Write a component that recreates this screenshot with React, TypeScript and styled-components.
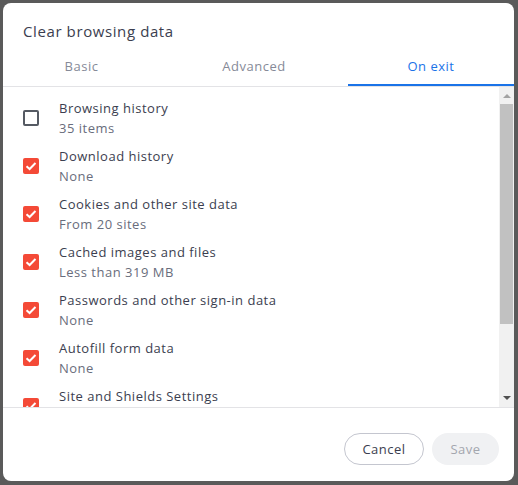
import React from "react";
import styled, { createGlobalStyle } from "styled-components";

const Global = createGlobalStyle`
  html, body { margin: 0; padding: 0; background: #5a5a5a; }
  body { font-family: "Open Sans", "Liberation Sans", sans-serif; letter-spacing: 0.5px; }
  * { box-sizing: border-box; }
`;

const Backdrop = styled.div`
  width: 518px;
  height: 485px;
  padding: 3px 4px 4px 3px;
  background: #5a5a5a;
`;

const Dialog = styled.div`
  width: 511px;
  height: 478px;
  background: #ffffff;
  border-radius: 8px;
  display: flex;
  flex-direction: column;
  overflow: hidden;
`;

const Title = styled.h2`
  margin: 18px 0 0 20px;
  font-size: 15px;
  line-height: 20px;
  font-weight: 400;
  color: #3b3e4f;
  letter-spacing: 0.6px;
`;

const Tabs = styled.div`
  margin-top: 5px;
  display: grid;
  grid-template-columns: 157px 188px 166px;
  border-bottom: 1px solid #e3e3e6;
`;

const Tab = styled.div<{ $active?: boolean }>`
  height: 40px;
  display: flex;
  align-items: center;
  justify-content: center;
  font-size: 13px;
  color: ${(p) => (p.$active ? "#1a73e8" : "#868a98")};
  box-shadow: ${(p) => (p.$active ? "inset 0 -2px 0 #1a73e8" : "none")};
`;

const ListArea = styled.div`
  height: 321px;
  display: flex;
  border-bottom: 1px solid #e3e3e6;
`;

const List = styled.div`
  flex: 1;
  overflow: hidden;
  padding: 7px 0 0 20px;
`;

const Row = styled.div`
  display: flex;
  align-items: center;
  gap: 20px;
  padding: 4px 0;
`;

const Box = styled.div<{ $checked?: boolean }>`
  width: 16px;
  height: 16px;
  flex: none;
  border-radius: 2px;
  display: flex;
  align-items: center;
  justify-content: center;
  background: ${(p) => (p.$checked ? "#f44a37" : "transparent")};
  border: ${(p) => (p.$checked ? "none" : "2px solid #555a63")};
`;

const Texts = styled.div`
  display: flex;
  flex-direction: column;
`;

const ItemTitle = styled.div`
  font-size: 13px;
  line-height: 20px;
  color: #3b3e4f;
`;

const ItemSub = styled.div`
  font-size: 13px;
  line-height: 20px;
  color: #696d7c;
`;

const Scrollbar = styled.div`
  width: 15px;
  flex: none;
  background: #f1f1f1;
  display: flex;
  flex-direction: column;
  align-items: center;
`;

const Arrow = styled.div`
  height: 17px;
  width: 15px;
  display: flex;
  align-items: center;
  justify-content: center;
`;

const Thumb = styled.div`
  width: 13px;
  height: 220px;
  background: #c1c1c1;
`;

const Spacer = styled.div`
  flex: 1;
`;

const Footer = styled.div`
  flex: 1;
  display: flex;
  justify-content: flex-end;
  align-items: flex-start;
  gap: 8px;
  padding: 25px 15px 0 0;
`;

const Button = styled.button<{ $primary?: boolean }>`
  height: 32px;
  border-radius: 16px;
  font-family: inherit;
  font-size: 13px;
  letter-spacing: 0.5px;
  padding: 0;
  width: ${(p) => (p.$primary ? "67px" : "80px")};
  border: ${(p) => (p.$primary ? "none" : "1px solid #c4c6cf")};
  background: ${(p) => (p.$primary ? "#f0f1f3" : "#ffffff")};
  color: ${(p) => (p.$primary ? "#a3a6ae" : "#3b3e4f")};
`;

const Check = () => (
  <svg width="12" height="10" viewBox="0 0 12 10">
    <path d="M1.5 5.2 L4.6 8 L10.5 2" fill="none" stroke="#fff" strokeWidth="2" />
  </svg>
);

const items = [
  { title: "Browsing history", sub: "35 items", checked: false },
  { title: "Download history", sub: "None", checked: true },
  { title: "Cookies and other site data", sub: "From 20 sites", checked: true },
  { title: "Cached images and files", sub: "Less than 319 MB", checked: true },
  { title: "Passwords and other sign-in data", sub: "None", checked: true },
  { title: "Autofill form data", sub: "None", checked: true },
  { title: "Site and Shields Settings", sub: "None", checked: true },
];

export default function App() {
  return (
    <>
      <Global />
      <Backdrop>
        <Dialog>
          <Title>Clear browsing data</Title>
          <Tabs>
            <Tab>Basic</Tab>
            <Tab>Advanced</Tab>
            <Tab $active>On exit</Tab>
          </Tabs>
          <ListArea>
            <List>
              {items.map((it) => (
                <Row key={it.title}>
                  <Box $checked={it.checked}>{it.checked && <Check />}</Box>
                  <Texts>
                    <ItemTitle>{it.title}</ItemTitle>
                    <ItemSub>{it.sub}</ItemSub>
                  </Texts>
                </Row>
              ))}
            </List>
            <Scrollbar>
              <Arrow>
                <svg width="8" height="5" viewBox="0 0 8 5">
                  <path d="M0 5 L4 1 L8 5 Z" fill="#a3a3a3" />
                </svg>
              </Arrow>
              <Thumb />
              <Spacer />
              <Arrow>
                <svg width="8" height="5" viewBox="0 0 8 5">
                  <path d="M0 0 L8 0 L4 4 Z" fill="#505050" />
                </svg>
              </Arrow>
            </Scrollbar>
          </ListArea>
          <Footer>
            <Button>Cancel</Button>
            <Button $primary>Save</Button>
          </Footer>
        </Dialog>
      </Backdrop>
    </>
  );
}
